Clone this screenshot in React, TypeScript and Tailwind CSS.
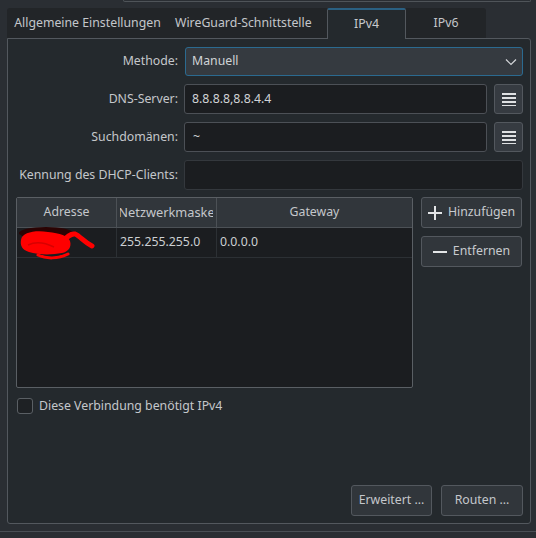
import React from "react";

const labelCls = "text-right pr-[6px] text-[#c4c7cb] whitespace-nowrap";

function ListIcon() {
  return (
    <svg width="14" height="14" viewBox="0 0 14 14">
      <rect x="0" y="1" width="14" height="2" fill="#dfe1e3" />
      <rect x="0" y="5" width="14" height="2" fill="#dfe1e3" />
      <rect x="0" y="9" width="14" height="2" fill="#dfe1e3" />
      <rect x="0" y="13" width="14" height="1.5" fill="#dfe1e3" />
    </svg>
  );
}

function ListButton() {
  return (
    <div className="w-[29px] h-[30px] shrink-0 flex items-center justify-center rounded-[3px] border border-[#53585e] bg-[#363b41]">
      <ListIcon />
    </div>
  );
}

// hand-drawn red marker over the address cell
function Scribble() {
  return (
    <svg width="84" height="36" viewBox="0 0 84 36" className="overflow-visible">
      <ellipse cx="28" cy="8" rx="27" ry="6" fill="#2a0303" />
      <path
        d="M3 15 C4 7 18 5 30 7 C42 8 50 11 52 16 C54 22 50 27 44 28 C34 30 20 30 11 27 C4 25 2 20 3 15 Z"
        fill="#ff0000"
      />
      <path
        d="M42 19 C48 13 52 8 57 9 C62 11 66 17 74 21"
        stroke="#ff0000"
        strokeWidth="5"
        strokeLinecap="round"
        fill="none"
      />
      <path
        d="M20 30 C28 34 40 34 50 29"
        stroke="#ff0000"
        strokeWidth="3"
        strokeLinecap="round"
        fill="none"
      />
      <path d="M10 20 C18 16 28 18 36 22" stroke="#d80000" strokeWidth="1.5" fill="none" />
    </svg>
  );
}

export default function App() {
  return (
    <div className="w-[536px] h-[538px] overflow-hidden bg-[#2a2e33] font-['Noto_Sans',sans-serif] text-[12.3px] text-[#c8cbcf]">
      {/* frame of the section above */}
      <div className="h-[2px] ml-[123px] w-[408px] border-b border-l border-r border-[#4f5459] rounded-b-[3px]" />

      {/* tab bar */}
      <div className="mt-[6px] ml-[7px] w-[479px] h-[30px] flex items-start bg-[#222528] rounded-t-[3px]">
        <div className="w-[161px] h-[30px] flex items-center justify-center text-[#c4c7cb]">
          Allgemeine Einstellungen
        </div>
        <div className="w-[159px] h-[30px] flex items-center pl-[7px] text-[#c4c7cb]">
          WireGuard-Schnittstelle
        </div>
        <div className="relative z-10 w-[79px] h-[31px] flex items-center justify-center bg-[#24292d] border-l border-r border-[#53585e] border-t-2 border-t-[#2a6082] rounded-t-[2px] text-[#c8cbcf]">
          IPv4
        </div>
        <div className="w-[80px] h-[30px] flex items-center justify-center text-[#c4c7cb]">
          IPv6
        </div>
      </div>

      {/* tab page */}
      <div className="ml-[7px] w-[524px] h-[486px] border border-[#53585e] rounded-tr-[3px] rounded-b-[3px] bg-[#24292d] flex flex-col pt-[8px] pl-[8px] pr-[7px] pb-[7px]">
        <div className="grid grid-cols-[168px_1fr] gap-y-[8px] items-center">
          <div className={labelCls}>Methode:</div>
          <div className="h-[29px] ml-[1px] flex items-center justify-between rounded-[3px] border border-[#2b6a90] bg-[#353a40] pl-[6px] pr-[5px]">
            <span className="text-[#d0d3d6]">Manuell</span>
            <svg width="12" height="8" viewBox="0 0 12 8">
              <path d="M1 1.5 L6 6.5 L11 1.5" stroke="#d3d5d8" strokeWidth="1.2" fill="none" />
            </svg>
          </div>

          <div className={labelCls}>DNS-Server:</div>
          <div className="flex gap-[7px]">
            <div className="flex-1 h-[30px] flex items-center rounded-[3px] border border-[#4c5056] bg-[#1b1d20] pl-[7px] text-[#d0d3d6]">
              8.8.8.8,8.8.4.4
            </div>
            <ListButton />
          </div>

          <div className={labelCls}>Suchdomänen:</div>
          <div className="flex gap-[7px]">
            <div className="flex-1 h-[30px] flex items-center rounded-[3px] border border-[#4c5056] bg-[#1b1d20] pl-[8px] text-[#d0d3d6]">
              ~
            </div>
            <ListButton />
          </div>

          <div className={labelCls}>Kennung des DHCP-Clients:</div>
          <div className="h-[30px] rounded-[3px] border border-[#34383d] bg-[#1b1d20]" />
        </div>

        {/* address table + buttons */}
        <div className="mt-[7px] flex gap-[8px]">
          <div className="w-[397px] h-[191px] rounded-[2px] border border-[#5a5f64] bg-[#1b1d20] flex flex-col overflow-hidden">
            <div className="h-[30px] flex bg-[#31363b] border-b border-[#4c5156] text-[#c4c7cb]">
              <div className="w-[100px] flex items-center justify-center border-r border-[#4c5156] overflow-hidden whitespace-nowrap">
                Adresse
              </div>
              <div className="w-[100px] flex items-center justify-center border-r border-[#4c5156] whitespace-nowrap">
                <div className="w-[93px] flex justify-center overflow-hidden">
                  <span className="shrink-0 text-[12.8px]">Netzwerkmaske</span>
                </div>
              </div>
              <div className="flex-1 flex items-center justify-center">Gateway</div>
            </div>
            <div className="h-[30px] flex border-b border-[#2c3034] text-[#cdd0d3]">
              <div className="w-[100px] flex items-center pl-[1px] border-r border-[#2c3034]">
                <Scribble />
              </div>
              <div className="w-[100px] flex items-center pl-[3px] border-r border-[#2c3034]">
                255.255.255.0
              </div>
              <div className="flex-1 flex items-center pl-[3px]">0.0.0.0</div>
            </div>
          </div>

          <div className="flex-1 flex flex-col gap-[8px] pr-[1px]">
            <div className="h-[31px] flex items-center justify-center gap-[6px] rounded-[3px] border border-[#53585e] bg-[#31363b] text-[#c8cbcf]">
              <svg width="14" height="14" viewBox="0 0 14 14">
                <rect x="6" y="0" width="2" height="14" fill="#e3e5e7" />
                <rect x="0" y="6" width="14" height="2" fill="#e3e5e7" />
              </svg>
              <span>Hinzufügen</span>
            </div>
            <div className="h-[31px] flex items-center justify-center gap-[6px] rounded-[3px] border border-[#53585e] bg-[#31363b] text-[#c8cbcf]">
              <svg width="14" height="14" viewBox="0 0 14 14">
                <rect x="0" y="6" width="14" height="2" fill="#e3e5e7" />
              </svg>
              <span>Entfernen</span>
            </div>
          </div>
        </div>

        {/* checkbox */}
        <div className="mt-[9px] ml-[1px] flex items-center gap-[6px]">
          <div className="w-[16px] h-[16px] rounded-[3px] border border-[#5a5f64] bg-[#1e2124]" />
          <span className="text-[#c4c7cb]">Diese Verbindung benötigt IPv4</span>
        </div>

        <div className="flex-1" />

        {/* footer buttons */}
        <div className="flex justify-end gap-[9px]">
          <div className="w-[81px] h-[31px] flex items-center justify-center rounded-[3px] border border-[#53585e] bg-[#31363b] text-[#c4c7cb]">
            Erweitert ...
          </div>
          <div className="w-[82px] h-[31px] flex items-center justify-center rounded-[3px] border border-[#53585e] bg-[#31363b] text-[#c4c7cb]">
            Routen ...
          </div>
        </div>
      </div>

      {/* window separator */}
      <div className="mt-[7px] h-px bg-[#4a4f55]" />
    </div>
  );
}
